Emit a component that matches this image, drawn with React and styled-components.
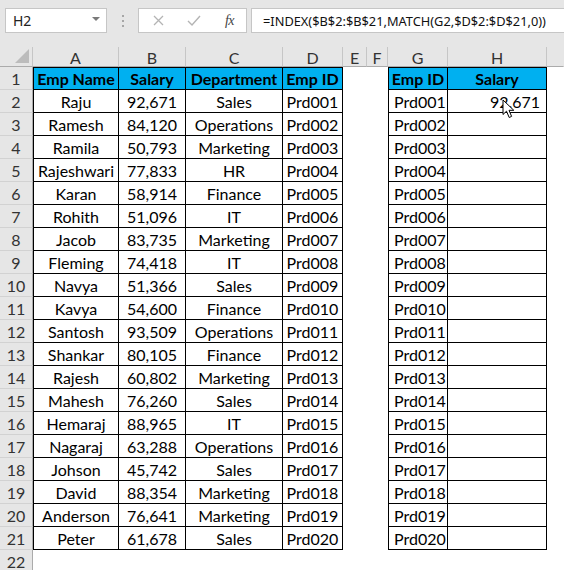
import React from "react";
import styled, { createGlobalStyle } from "styled-components";

const Global = createGlobalStyle`
  html, body { margin: 0; padding: 0; background: #ffffff; overflow: hidden; }
  body { width: 564px; height: 570px; font-family: Lato, "Noto Sans", sans-serif; }
`;

const Page = styled.div`
  position: relative;
  width: 564px;
  height: 570px;
  overflow: hidden;
  background: #ffffff;
`;

const Toolbar = styled.div`
  display: flex;
  align-items: flex-start;
  height: 47px;
  box-sizing: border-box;
  padding: 8px 0 0 5px;
  background: #e6e6e6;
  font-family: "Noto Sans", "Open Sans", sans-serif;
`;

const NameBox = styled.div`
  display: flex;
  align-items: center;
  justify-content: space-between;
  box-sizing: border-box;
  width: 102px;
  height: 25px;
  padding: 0 6px 0 7px;
  background: #ffffff;
  border: 1px solid #c6c6c6;
  font-size: 14px;
  color: #222;
`;

const Caret = styled.span`
  width: 0;
  height: 0;
  border-left: 4px solid transparent;
  border-right: 4px solid transparent;
  border-top: 4px solid #7a7a7a;
  margin-top: -3px;
`;

const Dots = styled.div`
  display: flex;
  flex-direction: column;
  justify-content: center;
  gap: 3px;
  width: 31px;
  height: 25px;
  align-items: center;
`;

const Dot = styled.span`
  width: 2px;
  height: 2px;
  background: #a6a6a6;
`;

const FuncBox = styled.div`
  display: flex;
  align-items: center;
  box-sizing: border-box;
  width: 109px;
  height: 25px;
  padding: 0 12px 0 14px;
  justify-content: space-between;
  background: #ffffff;
  border: 1px solid #c6c6c6;
`;

const Fx = styled.span`
  font-family: "Liberation Serif", serif;
  font-style: italic;
  font-size: 14px;
  color: #444;
  letter-spacing: -0.5px;
`;

const FormulaInput = styled.div`
  flex: 1;
  display: flex;
  align-items: center;
  box-sizing: border-box;
  height: 25px;
  margin-left: 4px;
  padding-left: 11px;
  background: #ffffff;
  border: 1px solid #c6c6c6;
  border-right: none;
  font-size: 12.8px;
  color: #111;
  white-space: nowrap;
  overflow: hidden;
`;

const Sheet = styled.div`
  display: grid;
  grid-template-columns: 33px 86px 67px 97px 60px 24px 21px 60px 99px 1fr;
  grid-template-rows: 20px;
  grid-auto-rows: 23px;
  font-family: Lato, "Noto Sans", sans-serif;
`;

const Corner = styled.div`
  position: relative;
  box-sizing: border-box;
  background: #e6e6e6;
  border-right: 1px solid #c6c6c6;
  border-bottom: 1px solid #ababab;
  &::after {
    content: "";
    position: absolute;
    right: 3px;
    bottom: 3px;
    width: 0;
    height: 0;
    border-left: 14px solid transparent;
    border-bottom: 14px solid #bcbcbc;
  }
`;

const ColHead = styled.div`
  display: flex;
  align-items: center;
  justify-content: center;
  box-sizing: border-box;
  background: #e6e6e6;
  border-right: 1px solid ${(p) => (p.$last ? "transparent" : "#c6c6c6")};
  border-bottom: 1px solid #ababab;
  font-size: 16px;
  color: #333;
  padding-top: 1px;
`;

const RowHead = styled.div`
  display: flex;
  align-items: center;
  justify-content: center;
  box-sizing: border-box;
  background: #e6e6e6;
  border-right: 1px solid #ababab;
  border-bottom: 1px solid #d2d2d2;
  font-size: 16px;
  color: #333;
`;

const Cell = styled.div`
  display: flex;
  align-items: center;
  justify-content: ${(p) => p.$align || "center"};
  box-sizing: border-box;
  padding: 0 ${(p) => (p.$align === "flex-end" ? "6px" : "0")} 0 ${(p) => (p.$align === "flex-start" ? "5px" : "0")};
  background: ${(p) => (p.$header ? "#00b0f0" : "#ffffff")};
  border-right: 1px solid ${(p) => (p.$boxed ? "#000" : "transparent")};
  border-bottom: 1px solid ${(p) => (p.$boxed ? "#000" : "transparent")};
  border-left: ${(p) => (p.$first ? "1px solid #000" : "none")};
  border-top: ${(p) => (p.$top ? "1px solid #000" : "none")};
  font-size: 16px;
  font-weight: ${(p) => (p.$header ? 700 : 400)};
  color: #000;
  white-space: nowrap;
`;

const Pointer = styled.svg`
  position: absolute;
  left: 502px;
  top: 99px;
  width: 13px;
  height: 20px;
`;

const rows = [
  ["Raju", "92,671", "Sales"],
  ["Ramesh", "84,120", "Operations"],
  ["Ramila", "50,793", "Marketing"],
  ["Rajeshwari", "77,833", "HR"],
  ["Karan", "58,914", "Finance"],
  ["Rohith", "51,096", "IT"],
  ["Jacob", "83,735", "Marketing"],
  ["Fleming", "74,418", "IT"],
  ["Navya", "51,366", "Sales"],
  ["Kavya", "54,600", "Finance"],
  ["Santosh", "93,509", "Operations"],
  ["Shankar", "80,105", "Finance"],
  ["Rajesh", "60,802", "Marketing"],
  ["Mahesh", "76,260", "Sales"],
  ["Hemaraj", "88,965", "IT"],
  ["Nagaraj", "63,288", "Operations"],
  ["Johson", "45,742", "Sales"],
  ["David", "88,354", "Marketing"],
  ["Anderson", "76,641", "Marketing"],
  ["Peter", "61,678", "Sales"],
];

const cols = ["A", "B", "C", "D", "E", "F", "G", "H", ""];

export default function App() {
  const id = (i) => `Prd${String(i + 1).padStart(3, "0")}`;
  return (
    <Page>
      <Global />
      <Toolbar>
        <NameBox>
          <span>H2</span>
          <Caret />
        </NameBox>
        <Dots>
          <Dot />
          <Dot />
          <Dot />
        </Dots>
        <FuncBox>
          <svg width="11" height="11" viewBox="0 0 11 11">
            <path d="M1 1 L10 10 M10 1 L1 10" stroke="#b4b4b4" strokeWidth="1.3" fill="none" />
          </svg>
          <svg width="14" height="11" viewBox="0 0 14 11">
            <path d="M1 6 L5 10 L13 1" stroke="#b4b4b4" strokeWidth="1.4" fill="none" />
          </svg>
          <Fx>fx</Fx>
        </FuncBox>
        <FormulaInput>=INDEX($B$2:$B$21,MATCH(G2,$D$2:$D$21,0))</FormulaInput>
      </Toolbar>
      <Sheet>
        <Corner />
        {cols.map((c, i) => (
          <ColHead key={i} $last={i === cols.length - 1}>
            {c}
          </ColHead>
        ))}

        <RowHead>1</RowHead>
        <Cell $boxed $header $first $top>Emp Name</Cell>
        <Cell $boxed $header $top>Salary</Cell>
        <Cell $boxed $header $top>Department</Cell>
        <Cell $boxed $header $top>Emp ID</Cell>
        <Cell />
        <Cell />
        <Cell $boxed $header $first $top>Emp ID</Cell>
        <Cell $boxed $header $top>Salary</Cell>
        <Cell />

        {rows.map((r, i) => (
          <React.Fragment key={i}>
            <RowHead>{i + 2}</RowHead>
            <Cell $boxed $first>{r[0]}</Cell>
            <Cell $boxed>{r[1]}</Cell>
            <Cell $boxed>{r[2]}</Cell>
            <Cell $boxed>{id(i)}</Cell>
            <Cell />
            <Cell />
            <Cell $boxed $first $align="flex-start">{id(i)}</Cell>
            <Cell $boxed $align="flex-end">{i === 0 ? "92,671" : ""}</Cell>
            <Cell />
          </React.Fragment>
        ))}

        <RowHead>22</RowHead>
        {cols.map((c, i) => (
          <Cell key={i} />
        ))}
      </Sheet>
      <Pointer viewBox="0 0 13 20">
        <path
          d="M1 1 L1 15.5 L4.5 12.2 L7.2 18.5 L9.6 17.4 L7 11.3 L11.8 11.3 Z"
          fill="#ffffff"
          stroke="#000"
          strokeWidth="1"
          strokeLinejoin="round"
        />
      </Pointer>
    </Page>
  );
}
